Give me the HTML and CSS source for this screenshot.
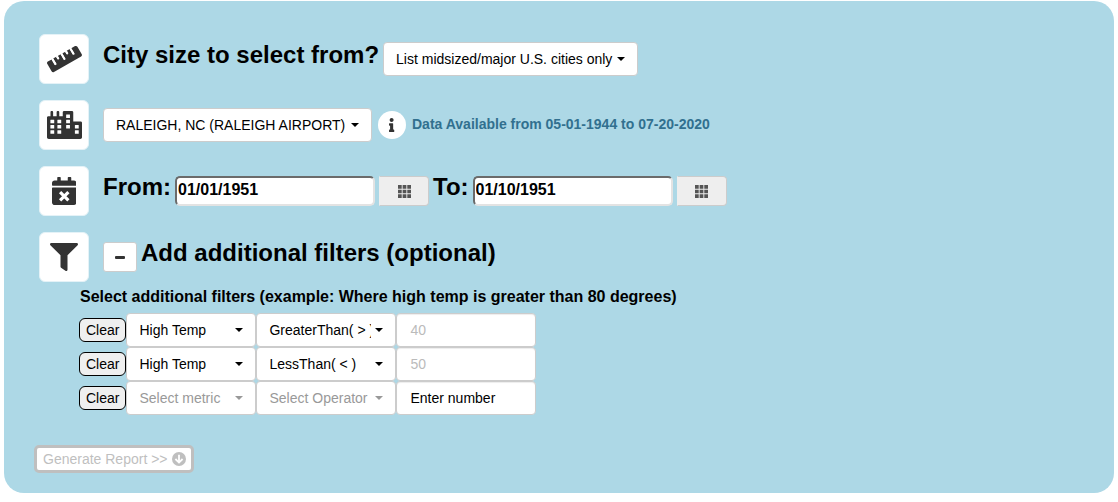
FILE: index.html
```html
<!DOCTYPE html>
<html lang="en">
<head>
<meta charset="utf-8">
<title>City weather report</title>
<link rel="stylesheet" href="styles.css">
</head>
<body>
<form class="panel">
  <div class="row">
    <span class="tile"><svg class="icon wide" viewBox="0 0 640 512" aria-hidden="true"><path d="M635.7 167.2L556.1 31.7c-8.8-15-28.3-20.1-43.5-11.5l-69 39.1L503.3 161c2.2 3.8.9 8.5-2.9 10.7l-13.8 7.8c-3.8 2.2-8.7.9-10.9-2.9L416 75l-55.2 31.3 27.9 47.4c2.2 3.8.9 8.5-2.9 10.7l-13.8 7.8c-3.8 2.2-8.7.9-10.9-2.9L333.2 122 278 153.3 337.8 255c2.2 3.7.9 8.5-2.9 10.7l-13.8 7.8c-3.8 2.2-8.7.9-10.9-2.9l-59.7-101.7-55.2 31.3 27.9 47.4c2.2 3.8.9 8.5-2.9 10.7l-13.8 7.8c-3.8 2.2-8.7.9-10.9-2.9l-27.9-47.5-55.2 31.3 59.7 101.7c2.2 3.7.9 8.5-2.9 10.7l-13.8 7.8c-3.8 2.2-8.7.9-10.9-2.9L84.9 262.9l-69 39.1C.7 310.7-4.6 329.8 4.2 344.8l79.6 135.6c8.8 15 28.3 20.1 43.5 11.5L624.1 210c15.2-8.6 20.4-27.8 11.6-42.8z"/><path d="M99 255l58 99M182 208l26 44M264 161l58 99M347 114l26 44M429 67l58 99" stroke="#fff" stroke-width="38"/></svg></span>
    <div class="fields">
      <label class="heading" for="size">City size to select from?</label>
      <span class="dropdown"><select id="size"><option>List midsized/major U.S. cities only</option></select></span>
    </div>
  </div>

  <div class="row">
    <span class="tile"><svg class="icon wide" viewBox="0 0 640 512" aria-hidden="true"><path d="M616 192H480V24c0-13.26-10.74-24-24-24H312c-13.26 0-24 10.74-24 24v72h-64V16c0-8.84-7.16-16-16-16h-16c-8.84 0-16 7.16-16 16v80h-64V16c0-8.84-7.16-16-16-16H80c-8.84 0-16 7.16-16 16v80H24c-13.26 0-24 10.74-24 24v360c0 17.67 14.33 32 32 32h576c17.67 0 32-14.33 32-32V216c0-13.26-10.75-24-24-24z"/><g fill="#fff"><rect x="62" y="158" width="70" height="68" rx="6"/><rect x="62" y="254" width="70" height="68" rx="6"/><rect x="62" y="350" width="70" height="68" rx="6"/><rect x="190" y="158" width="70" height="68" rx="6"/><rect x="190" y="254" width="70" height="68" rx="6"/><rect x="190" y="350" width="70" height="68" rx="6"/><rect x="350" y="62" width="70" height="68" rx="6"/><rect x="350" y="158" width="70" height="68" rx="6"/><rect x="350" y="254" width="70" height="68" rx="6"/><rect x="510" y="254" width="70" height="68" rx="6"/><rect x="510" y="350" width="70" height="68" rx="6"/></g></svg></span>
    <div class="fields station">
      <span class="dropdown"><select aria-label="Station"><option>RALEIGH, NC (RALEIGH AIRPORT)</option></select></span>
      <button type="button" class="info" aria-label="Station information"><svg viewBox="0 0 192 512" aria-hidden="true"><path d="M20 424.229h20V279.771H20c-11.046 0-20-8.954-20-20V212c0-11.046 8.954-20 20-20h112c11.046 0 20 8.954 20 20v212.229h20c11.046 0 20 8.954 20 20V492c0 11.046-8.954 20-20 20H20c-11.046 0-20-8.954-20-20v-47.771c0-11.046 8.954-20 20-20zM96 0C56.235 0 24 32.235 24 72s32.235 72 72 72 72-32.235 72-72S135.764 0 96 0z"/></svg></button>
      <span class="range">Data Available from 05-01-1944 to 07-20-2020</span>
    </div>
  </div>

  <div class="row">
    <span class="tile"><svg class="icon" viewBox="0 0 448 512" aria-hidden="true"><path d="M436 160H12c-6.6 0-12-5.4-12-12v-36c0-26.5 21.5-48 48-48h48V12c0-6.6 5.4-12 12-12h40c6.6 0 12 5.4 12 12v52h128V12c0-6.6 5.4-12 12-12h40c6.6 0 12 5.4 12 12v52h48c26.5 0 48 21.5 48 48v36c0 6.6-5.4 12-12 12zM12 192h424c6.6 0 12 5.4 12 12v260c0 26.5-21.5 48-48 48H48c-26.5 0-48-21.5-48-48V204c0-6.6 5.4-12 12-12z"/><path d="M148 276l152 152M300 276L148 428" stroke="#fff" stroke-width="58"/></svg></span>
    <div class="fields">
      <label class="heading" for="from">From:</label>
      <input class="date" id="from" type="text" value="01/01/1951">
      <button type="button" class="pick" aria-label="Pick start date"><svg viewBox="0 0 14 14" aria-hidden="true"><path d="M0 0h4v4H0zM5 0h4v4H5zM10 0h4v4h-4zM0 5h4v4H0zM5 5h4v4H5zM10 5h4v4h-4zM0 10h4v4H0zM5 10h4v4H5zM10 10h4v4h-4z"/></svg></button>
      <label class="heading" for="to">To:</label>
      <input class="date" id="to" type="text" value="01/10/1951">
      <button type="button" class="pick" aria-label="Pick end date"><svg viewBox="0 0 14 14" aria-hidden="true"><path d="M0 0h4v4H0zM5 0h4v4H5zM10 0h4v4h-4zM0 5h4v4H0zM5 5h4v4H5zM10 5h4v4h-4zM0 10h4v4H0zM5 10h4v4H5zM10 10h4v4h-4z"/></svg></button>
    </div>
  </div>

  <div class="row">
    <span class="tile"><svg class="icon" viewBox="0 0 512 512" aria-hidden="true"><path d="M487.976 0H24.028C2.71 0-8.047 25.866 7.058 40.971L192 225.941V432c0 7.831 3.821 15.17 10.237 19.662l80 55.98C298.02 518.69 320 507.493 320 487.98V225.941l184.947-184.97C520.021 25.896 509.338 0 487.976 0z"/></svg></span>
    <div class="fields">
      <button type="button" class="toggle" aria-label="Collapse filters"><svg viewBox="0 0 10 10" aria-hidden="true"><rect y="4" width="10" height="3" rx="1"/></svg></button>
      <h2 class="heading">Add additional filters (optional)</h2>
    </div>
  </div>

  <section class="filters">
    <h3 class="hint">Select additional filters (example: Where high temp is greater than 80 degrees)</h3>
    <div class="filter">
      <button type="button" class="clear">Clear</button>
      <span class="dropdown metric"><select aria-label="Metric 1"><option>High Temp</option></select></span>
      <span class="dropdown operator"><select aria-label="Operator 1"><option>GreaterThan( &gt; )</option></select></span>
      <input class="number muted" type="text" aria-label="Number 1" value="40">
    </div>
    <div class="filter">
      <button type="button" class="clear">Clear</button>
      <span class="dropdown metric"><select aria-label="Metric 2"><option>High Temp</option></select></span>
      <span class="dropdown operator"><select aria-label="Operator 2"><option>LessThan( &lt; )</option></select></span>
      <input class="number muted" type="text" aria-label="Number 2" value="50">
    </div>
    <div class="filter">
      <button type="button" class="clear">Clear</button>
      <span class="dropdown metric empty"><select aria-label="Metric 3"><option>Select metric</option></select></span>
      <span class="dropdown operator empty"><select aria-label="Operator 3"><option>Select Operator</option></select></span>
      <input class="number" type="text" aria-label="Number 3" value="Enter number">
    </div>
  </section>

  <button type="submit" class="generate">Generate Report &gt;&gt; <svg viewBox="0 0 14 14" aria-hidden="true"><circle cx="7" cy="7" r="7"/><path d="M7 2.8v7.6M3.4 7L7 10.6 10.6 7" fill="none" stroke="#fff" stroke-width="1.8"/></svg></button>
</form>
</body>
</html>
```
FILE: styles.css
```css
* {
  box-sizing: border-box;
}

body {
  margin: 0;
  background: #fff;
  color: #000;
  font: 14px/20px "Liberation Sans", Arial, sans-serif;
}

button,
input,
select {
  margin: 0;
  color: inherit;
  font: inherit;
}

.panel {
  display: flex;
  flex-direction: column;
  align-items: flex-start;
  margin: 1px 4px;
  padding: 33px 30px 20px;
  border-radius: 20px;
  background: #add8e6;
}

.row {
  display: flex;
  align-items: center;
  gap: 14px;
  margin: 0 0 16px 5px;
}

.tile {
  display: flex;
  flex: none;
  align-items: center;
  justify-content: center;
  width: 50px;
  height: 50px;
  border: 1px solid #e4f2f7;
  border-radius: 6px;
  background: #fff;
}

.icon {
  height: 28px;
  fill: #333;
}

.wide {
  width: 35px;
}

.fields {
  display: flex;
  flex-wrap: wrap;
  align-items: center;
  gap: 4px;
}

.station {
  gap: 6px;
}

.heading {
  margin: 0;
  padding-bottom: 8px;
  font-size: 24px;
  font-weight: 700;
  line-height: 26px;
}

.dropdown {
  position: relative;
  display: inline-flex;
}

.dropdown::after {
  position: absolute;
  top: 15px;
  right: 13px;
  border: 4px solid transparent;
  border-top-color: currentColor;
  border-bottom-width: 0;
  content: "";
  pointer-events: none;
}

.dropdown select {
  width: 100%;
  height: 34px;
  padding: 0 24px 0 12px;
  border: 1px solid #ccc;
  border-radius: 4px;
  background: #fff;
  appearance: none;
}

.info {
  display: flex;
  align-items: center;
  justify-content: center;
  width: 28px;
  height: 28px;
  padding: 0;
  border: 0;
  border-radius: 50%;
  background: #fff;
}

.info svg {
  height: 14px;
  fill: #333;
}

.range {
  padding-bottom: 2px;
  color: #31708f;
  font-weight: 700;
}

.date {
  width: 200px;
  height: 30px;
  padding: 0 1px 2px;
  border: 2px solid;
  border-color: #6b6b6b #e3e3e3 #e3e3e3 #6b6b6b;
  border-radius: 5px;
  background: #fff;
  font-size: 16px;
  font-weight: 700;
}

.pick {
  display: flex;
  align-items: center;
  justify-content: center;
  width: 50px;
  height: 30px;
  padding: 0;
  border: 1px solid #ccc;
  border-left-color: #eee;
  border-radius: 0 4px 4px 0;
  background: #eee;
}

.pick svg {
  width: 13px;
  fill: #555;
}

.toggle {
  display: flex;
  align-items: center;
  justify-content: center;
  width: 34px;
  height: 30px;
  padding: 0;
  border: 1px solid #ccc;
  border-radius: 3px;
  background: #fff;
}

.toggle svg {
  width: 10px;
  fill: #333;
}

.filters {
  margin: -11px 0 30px 45px;
}

.hint {
  margin: 0 0 6px 1px;
  font-size: 16px;
  font-weight: 700;
  line-height: 20px;
}

.filter {
  display: flex;
  align-items: center;
}

.clear {
  height: 24px;
  padding: 0 6px;
  border: 1px solid #000;
  border-radius: 6px;
  background: #efefef;
}

.metric {
  width: 130px;
}

.operator {
  width: 140px;
}

.empty {
  color: #999;
}

.number {
  width: 140px;
  height: 34px;
  padding: 0 13px;
  border: 1px solid #ccc;
  border-radius: 4px;
  background: #fff;
  box-shadow: inset 0 1px 1px rgba(0, 0, 0, 0.075);
}

.muted {
  color: #bbb;
}

.generate {
  display: flex;
  align-items: center;
  gap: 4px;
  height: 28px;
  padding: 0 5px 0 6px;
  border: 3px solid #bfbfbf;
  border-radius: 5px;
  background: #fff;
  color: #bfbfbf;
}

.generate svg {
  width: 14px;
  fill: #bfbfbf;
}
```
